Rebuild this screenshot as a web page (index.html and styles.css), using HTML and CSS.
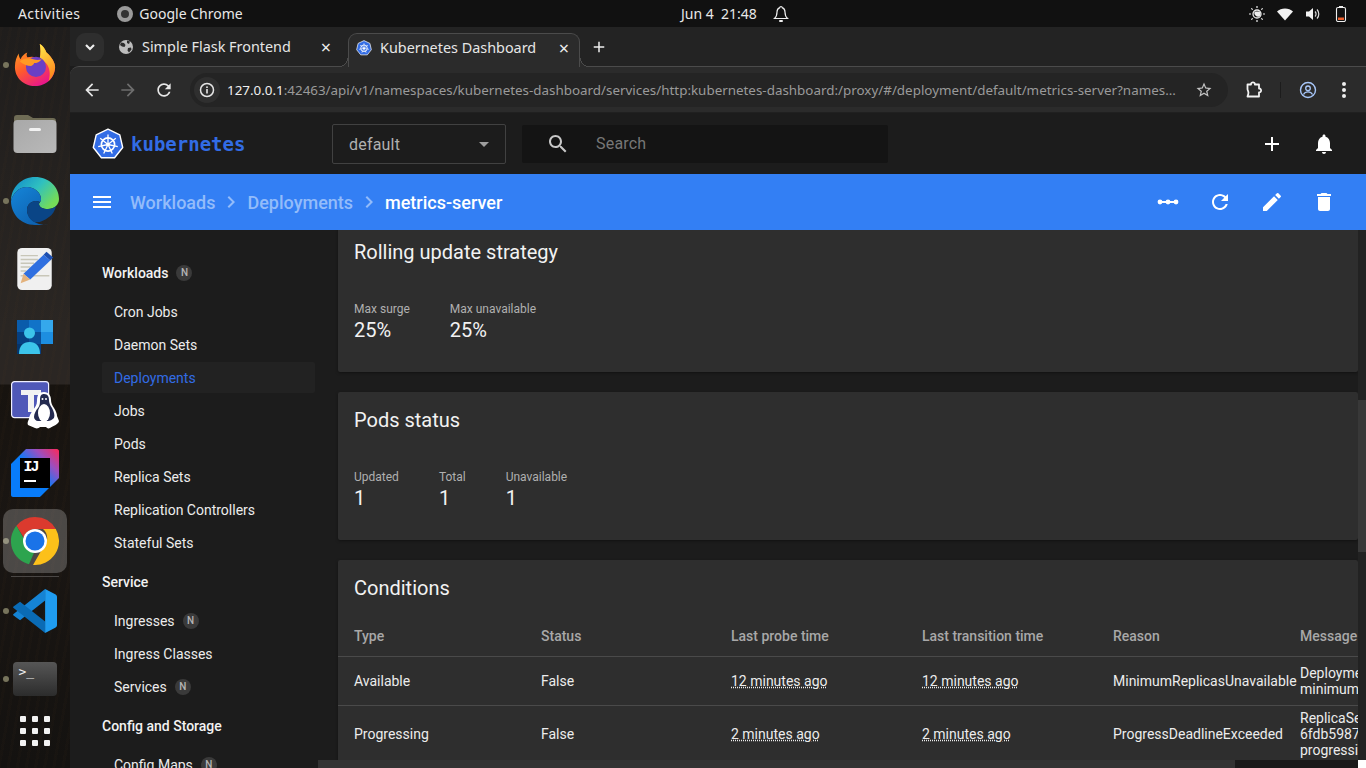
FILE: index.html
```html
<!DOCTYPE html>
<html lang="en">
<head>
  <meta charset="UTF-8" />
  <meta name="viewport" content="width=device-width, initial-scale=1.0"/>
  <title>Kubernetes Dashboard</title>
  <link rel="stylesheet" href="styles.css">
</head>
<body>

  <svg class="sprite" aria-hidden="true">
    <symbol id="k8s" viewBox="0 0 32 32">
      <polygon points="16,1.2 27.8,6.8 30.7,19.5 22.6,29.7 9.4,29.7 1.3,19.5 4.2,6.8" fill="#326ce5" stroke="#fff" stroke-width="1.4" stroke-linejoin="round"/>
      <g stroke="#fff" fill="none">
        <circle cx="16" cy="16.5" r="6.6" stroke-width="1.7"/>
        <path stroke-width="1.3" d="M16 16.5V6.5M16 16.5l7.8-6.2M16 16.5l9.8 2.2M16 16.5l4.3 9M16 16.5l-4.3 9M16 16.5l-9.8 2.2M16 16.5L8.2 10.3"/>
      </g>
      <circle cx="16" cy="16.5" r="1.7" fill="#fff"/>
    </symbol>
    <symbol id="globe" viewBox="0 0 16 16">
      <circle cx="8" cy="8" r="7" fill="#bdbdbd"/>
      <path d="M3 3.5l3 .5 1.5 2-1 2-2.5-.5L2 6zM9 1.5l3 1-1 2.5-2-1zM10 9l3-.5.5 2-2.5 3-1.5-2z" fill="#2c2c2c"/>
    </symbol>
  </svg>

  <header class="topbar">
    <div class="top-left">
      <span class="activities">Activities</span>
      <span class="app-dot"></span>
      <span>Google Chrome</span>
    </div>
    <div class="clock">
      <span>Jun 4&nbsp; 21:48</span>
      <svg class="clock-bell" viewBox="0 0 16 18"><path d="M8 1.5c-.8 0-1.2.5-1.2 1.1C4.800 3.300 4 5 4 7c0 3-.8 5-2.500 6.500h13C12.800 12 12 10 12 7c0-2-.8-3.700-2.800-4.400 0-.6-.4-1.100-1.200-1.100z" fill="none" stroke="#eee" stroke-width="1.2"/><rect x="6" y="15" width="4" height="2" rx="1" fill="#eee"/></svg>
    </div>
    <div class="tray">
      <svg class="tray-icon" viewBox="0 0 16 16"><circle cx="8" cy="8" r="4" fill="none" stroke="#eee" stroke-width="1.3"/><path d="M5.5 5.500a4 4 0 0 0 5 5 4 4 0 0 0 0-5z" fill="#eee"/><path d="M8 0v2M8 14v2M0 8h2M14 8h2M2.3 2.3l1.4 1.4M12.3 12.3l1.4 1.4M2.3 13.7l1.4-1.4M12.3 3.7l1.4-1.4" stroke="#eee" stroke-width="1.2"/></svg>
      <svg class="tray-icon" viewBox="0 0 16 16"><path d="M0 5.500C2 3.500 5 2.500 8 2.500s6 1 8 3l-8 9z" fill="#f2f2f2"/></svg>
      <svg class="tray-icon" viewBox="0 0 16 16"><path d="M1 5.500h3L8 2v12l-4-3.500H1z" fill="#f2f2f2"/><path d="M10 5.500a3.500 3.500 0 0 1 0 5M12 3.500a6.500 6.500 0 0 1 0 9" fill="none" stroke="#ddd" stroke-width="1.2"/></svg>
      <svg class="tray-icon" viewBox="0 0 16 16"><rect x="6" y="0" width="4" height="2" fill="#eee"/><rect x="3.500" y="1.500" width="9" height="14" rx="1.500" fill="none" stroke="#eee" stroke-width="1.1"/><rect x="5" y="11.500" width="6" height="2.500" fill="#ed5f2c"/></svg>
    </div>
  </header>

  <div class="desktop">

    <nav class="dock">
      <div class="dock-slot running">
        <svg class="dock-icon" viewBox="0 0 44 46">
          <defs>
            <linearGradient id="ffBody" x1="0" y1="0" x2="0.6" y2="1"><stop offset="0" stop-color="#ffb020"/><stop offset=".55" stop-color="#ff5a2c"/><stop offset="1" stop-color="#e9178a"/></linearGradient>
            <linearGradient id="ffFlame" x1="0" y1="0" x2="0.3" y2="1"><stop offset="0" stop-color="#ffe94a"/><stop offset="1" stop-color="#ff8a1e"/></linearGradient>
          </defs>
          <path d="M27 1c5 3 6 7 7 9 6 5 9 11 9 15 0 11-9 20-21 20S1 36 1 25c0-6 2-11 4-14 0 3 1 5 2 6 1-3 4-6 7-7-1 2-1 3 0 5 4-1 9-1 13 2 1-6 1-11 0-16z" fill="url(#ffBody)"/>
          <path d="M27 1c5 3 6 7 7 9 6 5 9 11 9 15 0 6-3 11-7 15 2-5 2-12-1-17-2-3-5-5-8-7 1-5 1-10 0-15z" fill="url(#ffFlame)"/>
          <circle cx="23" cy="25" r="10.500" fill="#6b3fc4"/>
          <path d="M6 19c4-3 10-4 14-2 3 1 6 1 9 0-2 3-5 4-8 4 0 1-1 2-3 3-4 0-9-2-12-5z" fill="#ff9a24"/>
        </svg>
      </div>
      <div class="dock-slot">
        <svg class="dock-icon" viewBox="0 0 44 42">
          <path d="M1 6c0-2 1-3 3-3h11l5 3h20c2 0 3 1 3 3v8H1z" fill="#6f6c55"/>
          <defs><linearGradient id="folder" x1="0" y1="0" x2="1" y2="1"><stop offset="0" stop-color="#a8a8a8"/><stop offset="1" stop-color="#b9b9b9"/></linearGradient></defs>
          <rect x="0.5" y="8" width="43" height="33" rx="4" fill="url(#folder)"/>
          <rect x="16" y="16" width="12" height="3" rx="1.5" fill="#f2f2f2"/>
        </svg>
      </div>
      <div class="dock-slot running">
        <svg class="dock-icon wide" viewBox="0 0 48 48">
          <defs>
            <linearGradient id="edgeTop" x1="0" y1="0" x2="1" y2="0.6"><stop offset="0" stop-color="#0f86cc"/><stop offset=".55" stop-color="#2fc0c0"/><stop offset="1" stop-color="#74dc58"/></linearGradient>
            <linearGradient id="edgeLow" x1="0" y1="0" x2="0.8" y2="1"><stop offset="0" stop-color="#1585d8"/><stop offset="1" stop-color="#0d5fae"/></linearGradient>
          </defs>
          <path d="M0 24C0 10 11 0 24 0c14 0 24 10 24 22 0 6-5 10-11 10-5 0-9-2-9-5 0-1 2-2 2-5 0-7-7-12-14-12C8 10 2 16 0 24z" fill="url(#edgeTop)"/>
          <path d="M0 24C2 16 8 10 16 10c7 0 14 5 14 12 0 1 0 2-1 3-6-3-13 1-13 8 0 6 5 12 12 14 3 1 6 1 9 0-4 1-8 1-13 1C10 48 0 37 0 24z" fill="url(#edgeLow)"/>
          <path d="M16 33c0-7 7-11 13-8-1 1-1 1-1 2 0 3 4 5 9 5 3 0 6-1 8-3-1 5-4 9-7 11-5 4-10 6-15 5-4-2-7-7-7-12z" fill="#0a4586"/>
        </svg>
      </div>
      <div class="dock-slot">
        <svg class="dock-icon" viewBox="0 0 38 46">
          <rect x="0.5" y="1" width="36" height="44" rx="5" fill="#f0f0f0"/>
          <path d="M4 9h18M4 13h18M4 17h14M4 21h10M4 25h6M4 30h30" stroke="#c8c6b8" stroke-width="1.5"/>
          <path d="M28 8l7 6-21 20-7-6z" fill="#2f6fe0"/>
          <path d="M28 8l3-3 7 6-3 3z" fill="#1d4fb0"/>
          <path d="M7 28l7 6-10 4z" fill="#e3b27c"/>
        </svg>
      </div>
      <div class="dock-slot">
        <svg class="dock-icon small" viewBox="0 0 36 34">
          <rect x="0" y="0" width="12" height="12" fill="#0a5cab"/>
          <rect x="12" y="0" width="12" height="12" fill="#1173c8"/>
          <rect x="24" y="0" width="12" height="12" fill="#35a8ec"/>
          <rect x="0" y="12" width="12" height="12" fill="#063f80"/>
          <rect x="12" y="12" width="12" height="12" fill="#0a4f98"/>
          <rect x="24" y="12" width="12" height="12" fill="#1d8ee0"/>
          <rect x="0" y="24" width="12" height="10" fill="#05356c"/>
          <rect x="12" y="24" width="12" height="10" fill="#083f80"/>
          <circle cx="12.5" cy="13" r="5.500" fill="#3cc4ea"/>
          <path d="M2 34c0-8 4-12 10.500-12S23 26 23 34z" fill="#3cc4ea"/>
        </svg>
      </div>
      <div class="dock-slot">
        <svg class="dock-icon wide" viewBox="0 0 48 48">
          <rect x="0.6" y="0.6" width="37" height="36" rx="3" fill="#4f58b8" stroke="#eef" stroke-width="1.2"/>
          <path d="M10 9h20v5h-7v17h-6V14h-7z" fill="#f2f2f2"/>
          <path d="M33 11c5 0 7 4 7 8 0 3 1 5 3 8 2 3 3 6 3 8l2 5c0 3-6 5-9 7-2 1-3 0-4-1h-6c-1 1-3 2-5 1l-7-3c-1-2 0-4 1-6 0-3 2-6 4-9 2-3 4-5 4-9 0-6 2-9 7-9z" fill="#fff"/>
          <path d="M33 13c4 0 5 3 5 6 0 3 1 5 3 8 2 4 3 7 2 10-2 2-4 3-6 3H27c-2 0-4-2-4-4 0-3 2-7 4-9 2-3 2-5 2-8 0-4 1-6 4-6z" fill="#232a50"/>
          <ellipse cx="33" cy="32" rx="6" ry="9" fill="#fff"/>
          <circle cx="31.500" cy="18" r="1" fill="#fff"/>
          <circle cx="35" cy="18" r="1" fill="#fff"/>
        </svg>
      </div>
      <div class="dock-slot">
        <svg class="dock-icon wide" viewBox="0 0 48 48">
          <defs><linearGradient id="ij" x1="0" y1="1" x2="1" y2="0"><stop offset="0" stop-color="#087cfa"/><stop offset=".5" stop-color="#087cfa"/><stop offset=".75" stop-color="#9a4fc0"/><stop offset="1" stop-color="#fe2857"/></linearGradient></defs>
          <path d="M15 0h31c1 0 2 1 2 2v27L30 47c-.5.5-1 1-2 1H2c-1 0-2-1-2-2V15z" fill="url(#ij)"/>
          <rect x="9" y="9" width="30" height="30" fill="#000"/>
          <text x="12.500" y="22" class="ij-text">IJ</text>
          <rect x="13" y="31" width="12" height="2" fill="#fff"/>
        </svg>
      </div>
      <div class="dock-slot running active">
        <svg class="dock-icon wide" viewBox="0 0 48 48">
          <path d="M24 0a24 24 0 0 1 20.800 12H24a12 12 0 0 0-11.400 8.300L5.400 8.800A24 24 0 0 1 24 0z" fill="#db3a2e"/>
          <path d="M5.400 8.800l10.400 18A9.500 9.500 0 0 0 24 33.500l-6 13.800A24 24 0 0 1 5.400 8.800z" fill="#2da44e"/>
          <path d="M44.800 12A24 24 0 0 1 22 47.900L32.300 30a12 12 0 0 0-.3-18z" fill="#fcc01a"/>
          <circle cx="24" cy="24" r="12" fill="#fff"/>
          <circle cx="24" cy="24" r="9.500" fill="#1a73e8"/>
        </svg>
      </div>
      <div class="dock-sep"></div>
      <div class="dock-slot running">
        <svg class="dock-icon" viewBox="0 0 100 100">
          <path d="M73 0v26L16 71 2 61a3 3 0 0 1 0-5z" fill="#1583d4"/>
          <path d="M73 100V74L16 29 2 39a3 3 0 0 0 0 5z" fill="#0a6bb5"/>
          <path d="M73 0l23 12c2 1 4 3 4 6v64c0 3-2 5-4 6l-23 12z" fill="#1f9cf0"/>
        </svg>
      </div>
      <div class="dock-slot running">
        <svg class="dock-icon" viewBox="0 0 44 34">
          <defs><linearGradient id="term" x1="0" y1="0" x2="0" y2="1"><stop offset="0" stop-color="#565656"/><stop offset="1" stop-color="#2c2c2c"/></linearGradient></defs>
          <rect x="0" y="0" width="44" height="34" rx="4" fill="url(#term)"/>
          <text x="5.500" y="14" class="term-text">&gt;_</text>
        </svg>
      </div>
      <div class="dock-apps">
        <span></span><span></span><span></span><span></span><span></span><span></span><span></span><span></span><span></span>
      </div>
    </nav>

    <div class="browser">
      <div class="tabstrip">
        <button class="tab-list">
          <svg viewBox="0 0 12 12"><path d="M3 4.500l3 3 3-3" fill="none" stroke="#eee" stroke-width="1.6"/></svg>
        </button>
        <div class="tab tab-idle">
          <svg class="favicon"><use href="#globe"/></svg>
          <span class="tab-title">Simple Flask Frontend</span>
          <span class="tab-close">&times;</span>
        </div>
        <div class="tab tab-active">
          <svg class="favicon"><use href="#k8s"/></svg>
          <span class="tab-title">Kubernetes Dashboard</span>
          <span class="tab-close">&times;</span>
        </div>
        <svg class="new-tab" viewBox="0 0 24 24"><path d="M19 13h-6v6h-2v-6H5v-2h6V5h2v6h6v2z"/></svg>
      </div>

      <div class="toolbar">
        <svg class="tool-icon" viewBox="0 0 24 24"><path d="M20 11H7.830l5.590-5.590L12 4l-8 8 8 8 1.410-1.410L7.830 13H20v-2z"/></svg>
        <svg class="tool-icon dim" viewBox="0 0 24 24"><path d="M12 4l-1.410 1.410L16.170 11H4v2h12.170l-5.580 5.590L12 20l8-8z"/></svg>
        <svg class="tool-icon" viewBox="0 0 24 24"><path d="M17.650 6.350C16.200 4.900 14.210 4 12 4c-4.420 0-7.990 3.580-7.990 8s3.570 8 7.990 8c3.730 0 6.840-2.550 7.730-6h-2.080c-.82 2.330-3.040 4-5.650 4-3.310 0-6-2.690-6-6s2.690-6 6-6c1.660 0 3.140.69 4.220 1.780L13 11h7V4l-2.350 2.350z"/></svg>
        <div class="omnibox">
          <span class="info-chip">
            <svg viewBox="0 0 16 16"><circle cx="8" cy="8" r="6.500" fill="none" stroke="#e6e6e6" stroke-width="1.5"/><rect x="7.200" y="7" width="1.600" height="4.500" fill="#e6e6e6"/><rect x="7.200" y="4.400" width="1.600" height="1.600" fill="#e6e6e6"/></svg>
          </span>
          <span class="url"><b>127.0.0.1</b>:42463/api/v1/namespaces/kubernetes-dashboard/services/http:kubernetes-dashboard:/proxy/#/deployment/default/metrics-server?namespace=default</span>
          <svg class="star" viewBox="0 0 24 24"><path d="M22 9.240l-7.190-.62L12 2 9.190 8.630 2 9.240l5.460 4.730L5.820 21 12 17.270 18.180 21l-1.630-7.030L22 9.240zM12 15.400l-3.760 2.270 1-4.280-3.320-2.880 4.380-.38L12 6.100l1.710 4.040 4.380.38-3.320 2.880 1 4.280L12 15.400z"/></svg>
        </div>
        <svg class="ext" viewBox="0 0 18 18"><path d="M2.500 3.500h3.500c-.3-2.800 4.200-2.800 3.900 0h4.100v4c2.800-.3 2.800 4.200 0 3.900v4.100H2.500l.8-2.600c.7-2.200-.8-3-.8-4.900z" fill="none" stroke="#f2f2f2" stroke-width="1.8" stroke-linejoin="round"/></svg>
        <span class="tool-sep"></span>
        <svg class="profile" viewBox="0 0 18 18"><circle cx="9" cy="9" r="7.500" fill="none" stroke="#a8c7fa" stroke-width="1.4"/><circle cx="9" cy="7.300" r="2.300" fill="none" stroke="#a8c7fa" stroke-width="1.3"/><path d="M4.500 13.500c1-2 2.500-2.700 4.500-2.700s3.500.7 4.500 2.700" fill="none" stroke="#a8c7fa" stroke-width="1.3"/></svg>
        <span class="kebab"><i></i><i></i><i></i></span>
      </div>

      <div class="kd-header">
        <div class="kd-logo">
          <svg class="kd-wheel"><use href="#k8s"/></svg>
          <span class="kd-name">kubernetes</span>
        </div>
        <div class="ns-select">
          <span>default</span>
          <i class="caret"></i>
        </div>
        <div class="search-box">
          <svg class="search-icon" viewBox="0 0 24 24"><path d="M15.500 14h-.79l-.28-.27C15.410 12.590 16 11.110 16 9.500 16 5.910 13.090 3 9.500 3S3 5.910 3 9.500 5.910 16 9.500 16c1.610 0 3.090-.59 4.230-1.570l.27.28v.79l5 4.990L20.490 19l-4.990-5zm-6 0C7.010 14 5 11.990 5 9.500S7.010 5 9.500 5 14 7.010 14 9.500 11.990 14 9.500 14z"/></svg>
          <span>Search</span>
        </div>
        <div class="kd-actions">
          <svg class="mat" viewBox="0 0 24 24"><path d="M19 13h-6v6h-2v-6H5v-2h6V5h2v6h6v2z"/></svg>
          <svg class="mat" viewBox="0 0 24 24"><path d="M12 22c1.100 0 2-.9 2-2h-4c0 1.100.9 2 2 2zm6-6v-5c0-3.070-1.630-5.640-4.500-6.320V4c0-.83-.67-1.500-1.500-1.500s-1.500.67-1.500 1.500v.68C7.640 5.360 6 7.920 6 11v5l-2 2v1h16v-1l-2-2z"/></svg>
        </div>
      </div>

      <div class="kd-bar">
        <svg class="mat menu-icon" viewBox="0 0 24 24"><path d="M3 18h18v-2H3v2zm0-5h18v-2H3v2zm0-7v2h18V6H3z"/></svg>
        <div class="crumbs">
          <span class="crumb">Workloads</span>
          <svg class="chev" viewBox="0 0 24 24"><path d="M10 6L8.590 7.410 13.170 12l-4.580 4.590L10 18l6-6z"/></svg>
          <span class="crumb">Deployments</span>
          <svg class="chev" viewBox="0 0 24 24"><path d="M10 6L8.590 7.410 13.170 12l-4.580 4.590L10 18l6-6z"/></svg>
          <span class="crumb current">metrics-server</span>
        </div>
        <div class="kd-actions">
          <svg class="mat" viewBox="0 0 24 24"><path d="M2 11h20v2H2z"/><circle cx="4" cy="12" r="2.400"/><circle cx="12" cy="12" r="2.400"/><circle cx="20" cy="12" r="2.400"/></svg>
          <svg class="mat" viewBox="0 0 24 24"><path d="M17.650 6.350C16.200 4.900 14.210 4 12 4c-4.420 0-7.990 3.580-7.990 8s3.570 8 7.990 8c3.730 0 6.840-2.550 7.730-6h-2.080c-.82 2.330-3.040 4-5.650 4-3.310 0-6-2.690-6-6s2.690-6 6-6c1.660 0 3.140.69 4.220 1.780L13 11h7V4l-2.350 2.350z"/></svg>
          <svg class="mat" viewBox="0 0 24 24"><path d="M3 17.250V21h3.750L17.810 9.940l-3.750-3.750L3 17.250zM20.710 7.040a1 1 0 0 0 0-1.410l-2.340-2.340a1 1 0 0 0-1.410 0l-1.830 1.830 3.750 3.750 1.830-1.830z"/></svg>
          <svg class="mat" viewBox="0 0 24 24"><path d="M6 19c0 1.100.9 2 2 2h8c1.100 0 2-.9 2-2V7H6v12zM19 4h-3.500l-1-1h-5l-1 1H5v2h14V4z"/></svg>
        </div>
      </div>

      <div class="kd-main">
        <aside class="sidenav">
          <div class="nav-group">Workloads <span class="ns-badge">N</span></div>
          <a class="nav-item">Cron Jobs</a>
          <a class="nav-item">Daemon Sets</a>
          <a class="nav-item selected">Deployments</a>
          <a class="nav-item">Jobs</a>
          <a class="nav-item">Pods</a>
          <a class="nav-item">Replica Sets</a>
          <a class="nav-item">Replication Controllers</a>
          <a class="nav-item">Stateful Sets</a>
          <div class="nav-group">Service</div>
          <a class="nav-item">Ingresses <span class="ns-badge">N</span></a>
          <a class="nav-item">Ingress Classes</a>
          <a class="nav-item">Services <span class="ns-badge">N</span></a>
          <div class="nav-group">Config and Storage</div>
          <a class="nav-item">Config Maps <span class="ns-badge">N</span></a>
        </aside>

        <div class="content">
          <main class="pane">
            <section class="card">
              <h2>Rolling update strategy</h2>
              <div class="stats">
                <div class="stat"><label>Max surge</label><span>25%</span></div>
                <div class="stat"><label>Max unavailable</label><span>25%</span></div>
              </div>
            </section>

            <section class="card">
              <h2>Pods status</h2>
              <div class="stats">
                <div class="stat"><label>Updated</label><span>1</span></div>
                <div class="stat"><label>Total</label><span>1</span></div>
                <div class="stat"><label>Unavailable</label><span>1</span></div>
              </div>
            </section>

            <section class="card card-table">
              <h2>Conditions</h2>
              <table class="conditions">
                <thead>
                  <tr>
                    <th class="c-type">Type</th>
                    <th class="c-status">Status</th>
                    <th class="c-time">Last probe time</th>
                    <th class="c-time">Last transition time</th>
                    <th class="c-reason">Reason</th>
                    <th class="c-msg">Message</th>
                  </tr>
                </thead>
                <tbody>
                  <tr>
                    <td>Available</td>
                    <td>False</td>
                    <td><span class="ago">12 minutes ago</span></td>
                    <td><span class="ago">12 minutes ago</span></td>
                    <td>MinimumReplicasUnavailable</td>
                    <td class="msg">Deployment does not have<br>minimum availability.</td>
                  </tr>
                  <tr>
                    <td>Progressing</td>
                    <td>False</td>
                    <td><span class="ago">2 minutes ago</span></td>
                    <td><span class="ago">2 minutes ago</span></td>
                    <td>ProgressDeadlineExceeded</td>
                    <td class="msg">ReplicaSet "metrics-server-<br>6fdb59879" has timed out<br>progressing.</td>
                  </tr>
                </tbody>
              </table>
            </section>
          </main>
          <div class="vbar"><div class="vthumb"></div></div>
          <div class="hbar"><div class="hthumb"></div></div>
          <div class="corner"></div>
        </div>
      </div>
    </div>
  </div>

</body>
</html>
```

FILE: styles.css
```css
* {
  box-sizing: border-box;
}

html, body {
  height: 100%;
}

body {
  margin: 0;
  overflow: hidden;
  background: #1c1c1c;
  font-family: Roboto, sans-serif;
  color: #fff;
}

.sprite {
  display: none;
}

/* gnome top bar */
.topbar {
  height: 27px;
  background: #111;
  display: flex;
  align-items: center;
  font-family: "Noto Sans", sans-serif;
  font-size: 14px;
  color: #e8e8e8;
}

.top-left {
  width: 681px;
  padding-left: 18px;
  display: flex;
  align-items: center;
}

.activities {
  margin-right: 37px;
  letter-spacing: 0.4px;
}

.app-dot {
  width: 16px;
  height: 16px;
  border-radius: 50%;
  border: 4px solid #9a9a9a;
  background: #333;
  margin-right: 6px;
}

.clock {
  display: flex;
  align-items: center;
  gap: 16px;
}

.clock-bell {
  width: 16px;
  height: 18px;
}

.tray {
  margin-left: auto;
  padding-right: 17px;
  display: flex;
  gap: 12px;
}

.tray-icon {
  width: 16px;
  height: 16px;
}

.desktop {
  display: flex;
  height: 741px;
}

/* dock */
.dock {
  width: 70px;
  flex: none;
  padding-top: 4px;
  display: flex;
  flex-direction: column;
  align-items: center;
  background:
    repeating-linear-gradient(100deg, rgba(90, 60, 30, 0.05) 0 3px, transparent 3px 9px),
    linear-gradient(#1f1d1c 0, #2a2623 300px, #2b2623 357px, #17130f 358px, #1a1613 500px, #141210 741px);
}

.dock-slot {
  height: 68px;
  width: 70px;
  flex: none;
  display: flex;
  align-items: center;
  justify-content: center;
  position: relative;
}

.dock-slot.running::before {
  content: "";
  position: absolute;
  left: 3px;
  top: 31px;
  width: 6px;
  height: 6px;
  border-radius: 50%;
  background: #77745c;
}

.dock-slot.active::after {
  content: "";
  position: absolute;
  z-index: 0;
  left: 3px;
  top: 2px;
  width: 64px;
  height: 64px;
  border-radius: 10px;
  background: rgba(255, 255, 255, 0.22);
}

.dock-icon {
  width: 44px;
  height: 44px;
  position: relative;
  z-index: 1;
}

.dock-icon.wide {
  width: 48px;
  height: 48px;
}

.dock-icon.small {
  width: 36px;
  height: 34px;
}

.dock-sep {
  width: 48px;
  height: 1px;
  margin: 1px 0 0;
  background: #4a4745;
}

.ij-text {
  font-family: "Liberation Mono", monospace;
  font-size: 15px;
  font-weight: 700;
  letter-spacing: -2px;
  fill: #fff;
}

.term-text {
  font-family: "DejaVu Sans Mono", monospace;
  font-size: 13px;
  fill: #eee;
}

.dock-apps {
  margin-top: 3px;
  display: grid;
  grid-template-columns: repeat(3, 6px);
  gap: 6px;
}

.dock-apps span {
  width: 6px;
  height: 6px;
  border-radius: 1px;
  background: #f2f2f2;
}

/* chrome */
.browser {
  flex: 1;
  min-width: 0;
  display: flex;
  flex-direction: column;
  background: #1c1c1c;
}

.tabstrip {
  height: 39px;
  flex: none;
  background: #232323;
  display: flex;
  align-items: flex-end;
  padding-left: 6px;
  font-family: "Noto Sans", sans-serif;
  font-size: 14.4px;
  color: #e6e6e6;
}

.tab-list {
  width: 28px;
  height: 28px;
  margin-bottom: 5px;
  padding: 0 6px;
  border: none;
  border-radius: 9px;
  background: #2e2e2e;
}

.tab-list svg {
  display: block;
  width: 16px;
  height: 16px;
}

.tab {
  height: 33px;
  padding: 0 12px 6px 14px;
  display: flex;
  align-items: center;
}

.tab-idle {
  width: 244px;
  padding-right: 17px;
}

.tab-active {
  width: 232px;
  height: 34px;
  margin-bottom: -1px;
  position: relative;
  z-index: 1;
  background: #2b2b2b;
  border: 1px solid #4b4b4b;
  border-bottom: none;
  border-radius: 9px 9px 0 0;
  padding-left: 7px;
  padding-right: 10px;
}

/* the little flare where the tab meets the toolbar */
.tab-active::before,
.tab-active::after {
  content: "";
  position: absolute;
  bottom: 0;
  width: 9px;
  height: 9px;
}

.tab-active::before {
  left: -10px;
  background: radial-gradient(circle at 0 0, transparent 8px, #4b4b4b 8px, #4b4b4b 9px, #2b2b2b 9px);
}

.tab-active::after {
  right: -10px;
  background: radial-gradient(circle at 100% 0, transparent 8px, #4b4b4b 8px, #4b4b4b 9px, #2b2b2b 9px);
}

.favicon {
  width: 16px;
  height: 16px;
  flex: none;
  margin-right: 8px;
}

.tab-title {
  flex: 1;
  white-space: nowrap;
}

.tab-close {
  font-size: 18px;
  line-height: 1;
  color: #eee;
}

.new-tab {
  width: 18px;
  height: 18px;
  margin: 0 0 10px 10px;
  fill: #eee;
}

.toolbar {
  height: 47px;
  flex: none;
  background: #2b2b2b;
  border-top: 1px solid #4b4b4b;
  border-bottom: 1px solid #202020;
  border-radius: 9px 0 0 0;
  padding-left: 12px;
  display: flex;
  align-items: center;
}

.tool-icon {
  width: 20px;
  height: 20px;
  margin-right: 16px;
  fill: #e6e6e6;
}

.tool-icon.dim {
  fill: #6e6e6e;
}

.omnibox {
  width: 1038px;
  height: 34px;
  padding-right: 15px;
  flex: none;
  border-radius: 17px;
  background: #242424;
  display: flex;
  align-items: center;
}

.info-chip {
  width: 26px;
  height: 26px;
  margin: 0 7px 0 4px;
  flex: none;
  display: flex;
  align-items: center;
  justify-content: center;
  border-radius: 50%;
  background: #2f2f2f;
}

.info-chip svg {
  width: 16px;
  height: 16px;
}

.url {
  flex: 1;
  min-width: 0;
  overflow: hidden;
  white-space: nowrap;
  text-overflow: ellipsis;
  font-family: "Noto Sans", sans-serif;
  font-size: 13.4px;
  color: #9a9a9a;
}

.url b {
  font-weight: 400;
  color: #eee;
}

.star {
  width: 18px;
  height: 18px;
  margin-left: 14px;
  flex: none;
  fill: #c4c4c4;
}

.ext {
  width: 18px;
  height: 18px;
  margin-left: 17px;
  flex: none;
}

.tool-sep {
  width: 1px;
  height: 16px;
  margin: 0 18px 0 17px;
  background: #1c1c1c;
}

.profile {
  width: 18px;
  height: 18px;
  flex: none;
}

.kebab {
  margin-left: 25px;
  display: flex;
  flex-direction: column;
  gap: 2px;
}

.kebab i {
  width: 4px;
  height: 4px;
  border-radius: 50%;
  background: #eee;
}

/* dashboard header */
.kd-header {
  height: 61px;
  flex: none;
  background: #1c1c1c;
  padding-left: 22px;
  display: flex;
  align-items: center;
}

.kd-logo {
  width: 240px;
  display: flex;
  align-items: center;
  gap: 7px;
}

.kd-wheel {
  width: 32px;
  height: 32px;
}

.kd-name {
  font-family: "DejaVu Sans Mono", monospace;
  font-size: 19px;
  font-weight: 700;
  color: #326ce5;
}

.ns-select {
  width: 174px;
  height: 40px;
  padding: 1px 16px 0 16px;
  border: 1px solid #414141;
  border-radius: 2px;
  display: flex;
  align-items: center;
  justify-content: space-between;
  font-size: 16px;
  letter-spacing: 0.2px;
  color: #b0b0b0;
}

.caret {
  border-left: 5px solid transparent;
  border-right: 5px solid transparent;
  border-top: 5px solid #9e9e9e;
}

.search-box {
  width: 366px;
  height: 38px;
  margin-left: 16px;
  padding-left: 24px;
  border-radius: 2px;
  background: #141414;
  display: flex;
  align-items: center;
  gap: 26px;
  font-size: 16px;
  letter-spacing: 0.2px;
  color: #777;
}

.search-icon {
  width: 24px;
  height: 24px;
  fill: #c8c8c8;
}

.kd-actions {
  margin-left: auto;
  padding-right: 30px;
  display: flex;
  gap: 28px;
}

.mat {
  width: 24px;
  height: 24px;
  fill: #fff;
  display: block;
}

/* blue bar */
.kd-bar {
  height: 56px;
  flex: none;
  background: #337ff4;
  padding-left: 20px;
  display: flex;
  align-items: center;
}

.menu-icon {
  margin-right: 16px;
}

.crumbs {
  display: flex;
  align-items: center;
  font-size: 18px;
  font-weight: 500;
}

.crumb {
  color: #93bcfa;
}

.crumb.current {
  color: #fff;
}

.chev {
  width: 24px;
  height: 24px;
  margin: 0 4px;
  fill: #93bcfa;
}

/* sidebar + content */
.kd-main {
  flex: 1;
  min-height: 0;
  display: flex;
}

.sidenav {
  width: 248px;
  flex: none;
  overflow: hidden;
  padding: 20px 3px 0 32px;
  font-size: 14px;
}

.nav-group {
  height: 33px;
  margin: 6px 0;
  display: flex;
  align-items: center;
  gap: 8px;
  font-weight: 500;
  color: #f2f2f2;
}

.nav-item {
  height: 33px;
  padding-left: 12px;
  border-radius: 2px;
  display: flex;
  align-items: center;
  gap: 8px;
  color: #ececec;
}

.nav-item.selected {
  height: 31px;
  margin: 1px 0;
  background: #222;
  color: #326ce5;
}

.ns-badge {
  width: 16px;
  height: 16px;
  border-radius: 50%;
  background: #3a3a3a;
  display: inline-flex;
  align-items: center;
  justify-content: center;
  font-size: 10px;
  font-weight: 500;
  color: #b5b5b5;
}

.content {
  flex: 1;
  min-width: 0;
  display: grid;
  grid-template-columns: 1fr 8px;
  grid-template-rows: 1fr 8px;
}

.pane {
  overflow: hidden;
  padding-left: 20px;
  min-width: 0;
}

.card {
  height: 148px;
  margin-bottom: 20px;
  padding: 16px;
  border-radius: 2px;
  background: #2e2e2e;
  box-shadow: 0 1px 3px rgba(0, 0, 0, 0.4);
  overflow: hidden;
}

.card:first-child {
  margin-top: -6px;
}

.card-table {
  height: 300px;
  padding: 0;
}

.card h2 {
  margin: 0;
  font-size: 20px;
  line-height: 24px;
  font-weight: 400;
  color: #f2f2f2;
}

.card-table h2 {
  padding: 16px 16px 0;
}

.stats {
  display: flex;
  gap: 40px;
  margin-top: 37px;
}

.stat label {
  display: block;
  font-size: 12px;
  line-height: 16px;
  color: #b0b0b0;
}

.stat span {
  display: block;
  font-size: 20px;
  line-height: 26px;
  color: #f2f2f2;
}

.conditions {
  width: 1200px;
  margin-top: 16px;
  border-collapse: collapse;
  table-layout: fixed;
  font-size: 14px;
}

.conditions th {
  height: 40px;
  padding: 0 0 0 16px;
  text-align: left;
  font-weight: 500;
  color: #a8a8a8;
  border-bottom: 1px solid #4a4a4a;
}

.conditions td {
  height: 49px;
  padding: 0 0 0 16px;
  color: #ececec;
  border-bottom: 1px solid #4a4a4a;
  white-space: nowrap;
}

.c-type { width: 187px; }
.c-status { width: 190px; }
.c-time { width: 191px; }
.c-reason { width: 200px; }

.conditions th.c-msg,
.conditions td.msg {
  padding-left: 3px;
}

.msg {
  line-height: 16px;
}

.conditions tr:last-child td {
  height: 58px;
}

.ago {
  text-decoration: underline dotted;
}

.vbar {
  background: #222;
}

.vthumb {
  width: 8px;
  height: 152px;
  margin-top: 170px;
  background: #383838;
}

.hbar {
  background: #1a1a1a;
}

.hthumb {
  width: 917px;
  height: 8px;
  background: #333;
}

.corner {
  background: #fff;
}
```
